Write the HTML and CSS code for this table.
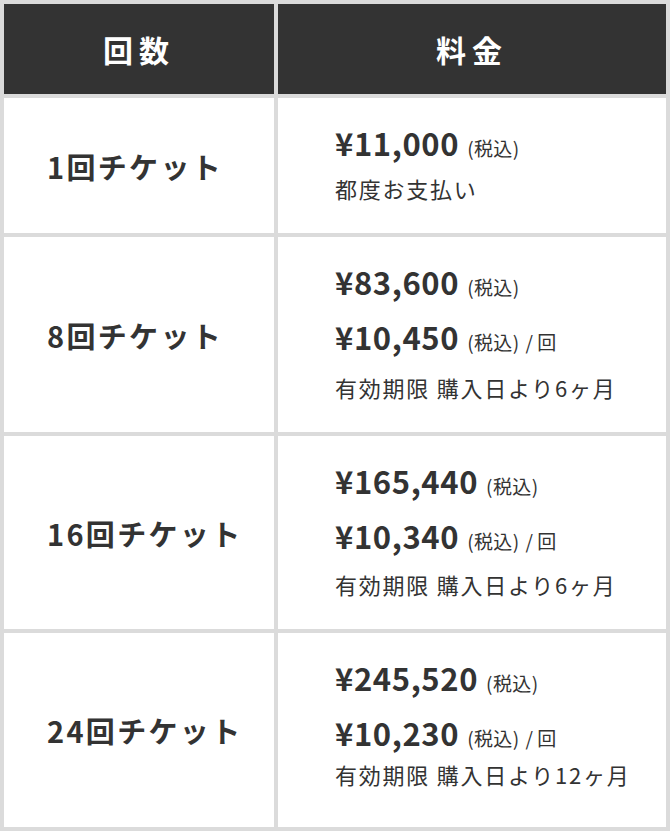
FILE: index.html
```html
<!DOCTYPE html>
<html lang="ja">
<head>
<meta charset="utf-8">
<title>料金表</title>
<link rel="stylesheet" href="styles.css">
</head>
<body>
<table class="price-table">
  <colgroup>
    <col class="price-table__col-count">
    <col class="price-table__col-fee">
  </colgroup>
  <thead>
    <tr>
      <th class="head">回数</th>
      <th class="head">料金</th>
    </tr>
  </thead>
  <tbody>
    <tr>
      <th class="ticket">1回チケット</th>
      <td class="fee fee--single">
        <p class="fee__line"><span class="fee__amount">¥11,000</span><span class="fee__tax">(税込)</span></p>
        <p class="fee__note">都度お支払い</p>
      </td>
    </tr>
    <tr>
      <th class="ticket">8回チケット</th>
      <td class="fee fee--wide">
        <p class="fee__line"><span class="fee__amount">¥83,600</span><span class="fee__tax">(税込)</span></p>
        <p class="fee__line"><span class="fee__amount">¥10,450</span><span class="fee__tax">(税込)</span><span class="fee__per">/ 回</span></p>
        <p class="fee__note">有効期限 購入日より6ヶ月</p>
      </td>
    </tr>
    <tr>
      <th class="ticket">16回チケット</th>
      <td class="fee fee--mid">
        <p class="fee__line"><span class="fee__amount">¥165,440</span><span class="fee__tax">(税込)</span></p>
        <p class="fee__line"><span class="fee__amount">¥10,340</span><span class="fee__tax">(税込)</span><span class="fee__per">/ 回</span></p>
        <p class="fee__note">有効期限 購入日より6ヶ月</p>
      </td>
    </tr>
    <tr>
      <th class="ticket">24回チケット</th>
      <td class="fee fee--last">
        <p class="fee__line"><span class="fee__amount">¥245,520</span><span class="fee__tax">(税込)</span></p>
        <p class="fee__line"><span class="fee__amount">¥10,230</span><span class="fee__tax">(税込)</span><span class="fee__per">/ 回</span></p>
        <p class="fee__note">有効期限 購入日より12ヶ月</p>
      </td>
    </tr>
  </tbody>
</table>
</body>
</html>
```
FILE: styles.css
```css
html, body {
  margin: 0;
  padding: 0;
  background: #ffffff;
}

body {
  font-family: "Noto Sans CJK JP", "Noto Sans", sans-serif;
  color: #333333;
}

.price-table {
  width: 670px;
  border-collapse: separate;
  border-spacing: 4px;
  background: #dbdbdb;
  table-layout: fixed;
}

.price-table__col-count {
  width: 270px;
}

.price-table__col-fee {
  width: 388px;
}

.head {
  box-sizing: border-box;
  height: 90px;
  padding: 0;
  background: #333333;
  color: #ffffff;
  font-size: 30px;
  font-weight: 700;
  letter-spacing: 0.2em;
  text-align: center;
  vertical-align: middle;
}

.ticket {
  box-sizing: border-box;
  padding: 0 0 0 43px;
  background: #ffffff;
  font-size: 29px;
  font-weight: 700;
  letter-spacing: 0.08em;
  text-align: left;
  vertical-align: middle;
  white-space: nowrap;
}

.fee {
  box-sizing: border-box;
  padding: 17px 0 28px 57px;
  background: #ffffff;
  vertical-align: top;
}

.fee__line {
  margin: 0;
  line-height: 55px;
  height: 55px;
  white-space: nowrap;
}

.fee__amount {
  font-size: 31px;
  font-weight: 700;
  letter-spacing: 0.02em;
}

.fee__tax {
  margin-left: 8px;
  font-size: 19px;
  font-weight: 400;
  letter-spacing: 0.02em;
}

.fee__per {
  margin-left: 6px;
  font-size: 19px;
  font-weight: 400;
}

.fee__note {
  margin: 1px 0 0;
  font-size: 22px;
  line-height: 34px;
  font-weight: 400;
  letter-spacing: 0.08em;
  white-space: nowrap;
}

.fee--wide .fee__note {
  margin-top: 6px;
}

.fee--mid .fee__note {
  margin-top: 4px;
}

.fee--last {
  padding-bottom: 36px;
}

.fee--last .fee__note {
  margin-top: -3px;
}
```
